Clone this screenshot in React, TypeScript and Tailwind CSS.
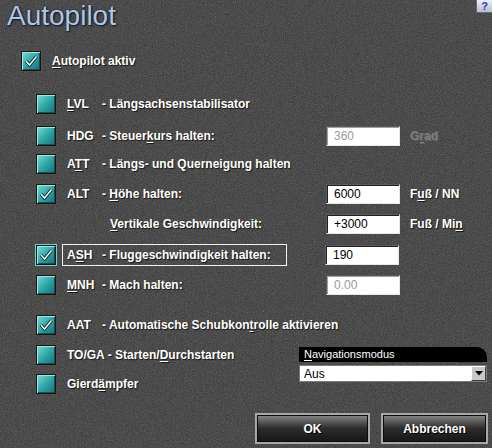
import React from "react";

function Box({ checked, focus }: { checked?: boolean; focus?: boolean }) {
  return (
    <div
      className={
        focus
          ? "w-[20px] h-[20px] shrink-0 border border-[#141414] outline outline-1 outline-[#6fd0d0] bg-gradient-to-br from-[#74dcd6] via-[#2fa6a6] to-[#16707a] shadow-[inset_1px_1px_0_#9aece6,inset_-1px_-1px_0_#0e5258] flex items-center justify-center"
          : "w-[20px] h-[20px] shrink-0 border border-[#141414] shadow-[0_0_0_1px_rgba(110,70,70,0.45),inset_1px_1px_0_#9aece6,inset_-1px_-1px_0_#0e5258] bg-gradient-to-br from-[#74dcd6] via-[#2fa6a6] to-[#16707a] flex items-center justify-center"
      }
    >
      {checked && (
        <svg width="14" height="12" viewBox="0 0 14 12">
          <polyline points="2,6 5.5,10 12.5,1.5" fill="none" stroke="#0a2a2e" strokeWidth="3.4" />
          <polyline points="2,6 5.5,10 12.5,1.5" fill="none" stroke="#f4ffff" strokeWidth="1.5" />
        </svg>
      )}
    </div>
  );
}

function U({ children }: { children: React.ReactNode }) {
  return <span className="underline underline-offset-[2px] decoration-1">{children}</span>;
}

function Field({ value, disabled }: { value: string; disabled?: boolean }) {
  return (
    <div
      className={
        disabled
          ? "w-[74px] h-[20px] shrink-0 bg-white border-t border-l border-t-[#5a5a5a] border-l-[#5a5a5a] border-b border-r border-b-[#e8e8e8] border-r-[#e8e8e8] shadow-[inset_1px_1px_0_#a0a0a0] flex items-center pl-[7px] text-[12px] font-normal text-[#9a9a9a] [text-shadow:none]"
          : "w-[74px] h-[20px] shrink-0 bg-white border-t border-l border-t-[#5a5a5a] border-l-[#5a5a5a] border-b border-r border-b-[#e8e8e8] border-r-[#e8e8e8] shadow-[inset_1px_1px_0_#202020] flex items-center pl-[7px] text-[12px] font-normal text-black [text-shadow:none]"
      }
    >
      {value}
    </div>
  );
}

function Btn({ label, w }: { label: string; w: string }) {
  return (
    <div
      className={
        w === "ok"
          ? "w-[115px] h-[31px] border-2 border-[#a8a8a8] shadow-[inset_0_0_0_1px_#0c0c0c] bg-gradient-to-b from-[#8c8c8c] via-[#2c2c2c] to-[#161616] flex items-center justify-center text-[12px] font-bold text-white [text-shadow:1px_1px_1px_#000]"
          : "w-[107px] h-[31px] border-2 border-[#a8a8a8] shadow-[inset_0_0_0_1px_#0c0c0c] bg-gradient-to-b from-[#8c8c8c] via-[#2c2c2c] to-[#161616] flex items-center justify-center text-[12px] font-bold text-white [text-shadow:1px_1px_1px_#000]"
      }
    >
      {label}
    </div>
  );
}

export default function App() {
  return (
    <div className="relative w-[492px] h-[448px] overflow-hidden bg-[#343434] font-['Liberation_Sans',Arial,sans-serif] text-white">
      <svg className="absolute inset-0 pointer-events-none" width="492" height="448">
        <filter id="noise">
          <feTurbulence type="fractalNoise" baseFrequency="1.1" numOctaves="2" stitchTiles="stitch" />
          <feColorMatrix type="saturate" values="0" />
        </filter>
        <rect width="492" height="448" filter="url(#noise)" opacity="0.35" />
      </svg>

      <div className="absolute top-0 right-0 w-[16px] h-[13px] bg-gradient-to-b from-[#eef0f6] to-[#b8bcc8] border-l border-b border-[#6a6a7a] flex items-center justify-center text-[11px] leading-[11px] font-bold text-[#2438b8]">
        ?
      </div>

      <div className="relative flex flex-col text-[12px] font-bold [text-shadow:1px_1px_1px_rgba(0,0,0,0.7)]">
        <div className="h-[30px] pl-[7px] text-[28px] leading-[32px] font-normal text-[#b3c6db] [text-shadow:1px_1px_2px_#06142a,0_0_2px_#10284a]">
          Autopilot
        </div>

        {/* Autopilot aktiv */}
        <div className="flex items-center h-[28px] mt-[17px] pl-[21px]">
          <Box checked />
          <span className="ml-[11px]">
            <U>A</U>utopilot aktiv
          </span>
        </div>

        {/* LVL */}
        <div className="flex items-center h-[28px] mt-[15px]">
          <div className="w-[326px] shrink-0 flex items-center pl-[36px]">
            <Box />
            <span className="ml-[11px] w-[35px]">
              <U>L</U>VL
            </span>
            <span>- Längsachsenstabilisator</span>
          </div>
        </div>

        {/* HDG */}
        <div className="flex items-center h-[28px] mt-[4px]">
          <div className="w-[326px] shrink-0 flex items-center pl-[36px]">
            <Box />
            <span className="ml-[11px] w-[35px]">HDG</span>
            <span>
              - Steuer<U>k</U>urs halten:
            </span>
          </div>
          <Field value="360" disabled />
          <span className="ml-[10px] text-[#7e7e7e] [text-shadow:1px_1px_0_rgba(255,255,255,0.15)]">
            G<U>r</U>ad
          </span>
        </div>

        {/* ATT */}
        <div className="flex items-center h-[28px]">
          <div className="w-[326px] shrink-0 flex items-center pl-[36px]">
            <Box />
            <span className="ml-[11px] w-[35px]">
              A<U>T</U>T
            </span>
            <span className="whitespace-nowrap">- Längs- und Querneigung halten</span>
          </div>
        </div>

        {/* ALT */}
        <div className="flex items-center h-[28px] mt-[2px]">
          <div className="w-[326px] shrink-0 flex items-center pl-[36px]">
            <Box checked />
            <span className="ml-[11px] w-[35px]">ALT</span>
            <span>
              - <U>H</U>öhe halten:
            </span>
          </div>
          <Field value="6000" />
          <span className="ml-[10px]">
            F<U>u</U>ß / NN
          </span>
        </div>

        {/* Vertikale */}
        <div className="flex items-center h-[28px] mt-[2px]">
          <div className="w-[326px] shrink-0 flex items-center pl-[110px]">
            <span>
              <U>V</U>ertikale Geschwindigkeit:
            </span>
          </div>
          <Field value="+3000" />
          <span className="ml-[10px]">
            Fuß / Mi<U>n</U>
          </span>
        </div>

        {/* ASH */}
        <div className="flex items-center h-[28px] mt-[3px]">
          <div className="w-[325px] shrink-0 flex items-center pl-[36px]">
            <Box checked focus />
            <div className="ml-[6px] w-[225px] h-[22px] border border-[#f0f0f0] flex items-center pl-[4px]">
              <span className="w-[35px]">
                A<U>S</U>H
              </span>
              <span>- Fluggeschwindigkeit halten:</span>
            </div>
          </div>
          <Field value="190" />
        </div>

        {/* MNH */}
        <div className="flex items-center h-[28px] mt-[2px]">
          <div className="w-[326px] shrink-0 flex items-center pl-[36px]">
            <Box />
            <span className="ml-[11px] w-[35px]">
              <U>M</U>NH
            </span>
            <span>- Mach halten:</span>
          </div>
          <Field value="0.00" disabled />
        </div>

        {/* AAT */}
        <div className="flex items-center h-[28px] mt-[12px]">
          <div className="flex items-center pl-[36px]">
            <Box checked />
            <span className="ml-[11px] w-[35px]">AAT</span>
            <span>
              - Automatische Schubkon<U>t</U>rolle aktivieren
            </span>
          </div>
        </div>

        {/* bottom section */}
        <div className="flex mt-[2px]">
          <div className="w-[299px] shrink-0 flex flex-col">
            <div className="flex items-center h-[28px] pl-[36px]">
              <Box />
              <span className="ml-[11px] whitespace-pre">
                TO/GA - Starten/<U>D</U>urchstarten
              </span>
            </div>
            <div className="flex items-center h-[28px] mt-[1px] pl-[36px]">
              <Box />
              <span className="ml-[11px]">
                Gierd<U>ä</U>mpfer
              </span>
            </div>
          </div>
          <div className="w-[188px] shrink-0 flex flex-col pt-[6px] [text-shadow:none]">
            <div className="h-[15px] bg-black rounded-tr-[10px] pl-[5px] flex items-center text-[11px] font-normal text-white">
              <span>
                <U>N</U>avigationsmodus
              </span>
            </div>
            <div className="mt-[3px] h-[17px] bg-white border border-[#7a7a7a] flex items-center text-[12px] font-normal text-black">
              <span className="pl-[4px] flex-1">Aus</span>
              <div className="w-[15px] h-[15px] bg-[#c8c8c8] border-t border-l border-t-white border-l-white border-b border-r border-b-[#404040] border-r-[#404040] flex items-center justify-center">
                <svg width="8" height="5" viewBox="0 0 8 5">
                  <polygon points="0,0 8,0 4,4.5" fill="#000" />
                </svg>
              </div>
            </div>
          </div>
        </div>

        {/* buttons */}
        <div className="flex mt-[15px] pl-[255px] gap-[11px]">
          <Btn label="OK" w="ok" />
          <Btn label="Abbrechen" w="ab" />
        </div>
      </div>
    </div>
  );
}
